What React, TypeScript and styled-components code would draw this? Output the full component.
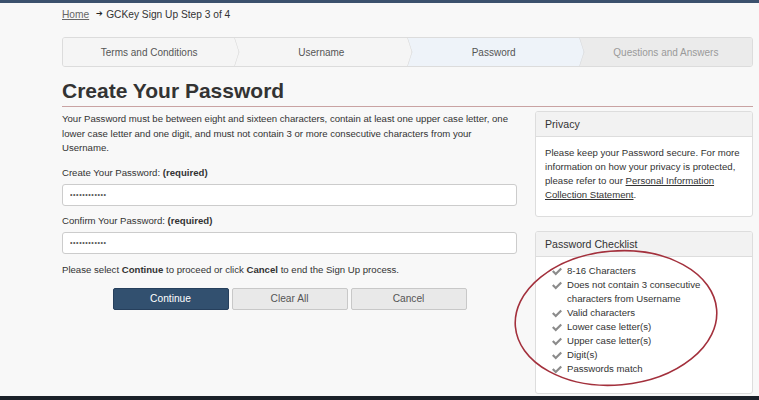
import styled, { createGlobalStyle } from 'styled-components';

const GlobalStyle = createGlobalStyle`
html, body {
  margin: 0;
  padding: 0;
  background: #f8f8f8;
  font-family: "Liberation Sans", Arial, sans-serif;
  color: #333;
}
`;

const Page = styled.div`
display: flex;
flex-direction: column;
height: 100vh;
overflow: hidden;
`;
const TopBar = styled.div`
height: 3px;
background: #3b516d;
flex-shrink: 0;
`;
const BottomBar = styled.div`
height: 4px;
background: #1b2129;
flex-shrink: 0;
`;
const Main = styled.main`
flex: 1;
overflow: hidden;
padding: 0 6px 0 62px;
`;
const Breadcrumb = styled.div`
display: flex;
align-items: center;
height: 14px;
margin-top: 4px;
margin-bottom: 16px;
font-size: 10.2px;
color: #333;
`;
const CrumbLink = styled.a`
color: #666;
text-decoration: underline;
margin-right: 7px;
`;
const Arrow = styled.span`
font-size: 8px;
line-height: 8px;
margin-right: 3px;
color: #222;
`;

const StepBar = styled.div`
display: flex;
height: 28px;
border: 1px solid #dcdcdc;
border-radius: 3px;
overflow: hidden;
`;
const Step = styled.div<{ $state: 'done' | 'active' | 'todo' }>`
position: relative;
flex: 1;
display: flex;
align-items: center;
justify-content: center;
font-size: 10px;
color: ${p => (p.$state === 'todo' ? '#9a9a9a' : '#555')};
background: ${p => (p.$state === 'active' ? '#eef3f9' : p.$state === 'todo' ? '#ebebeb' : '#f5f5f5')};

&:not(:last-child)::after {
  content: '';
  position: absolute;
  top: 50%;
  right: -10px;
  width: 20px;
  height: 20px;
  background: inherit;
  border-top: 1px solid #d2d2d2;
  border-right: 1px solid #d2d2d2;
  transform: translateY(-50%) scaleX(0.32) rotate(45deg);
  z-index: 1;
}
`;

const Title = styled.h1`
margin: 11px 0 0;
font-size: 21px;
line-height: 26px;
font-weight: bold;
color: #333;
padding-bottom: 2px;
border-bottom: 1px solid #c9a3a3;
`;

const Columns = styled.div`
display: flex;
gap: 18px;
margin-top: 5px;
`;
const LeftCol = styled.div`
width: 455px;
font-size: 9.6px;
`;
const RightCol = styled.div`
position: relative;
width: 218px;
margin-top: -1px;
`;
const Intro = styled.p`
margin: 0;
line-height: 14.5px;
`;
const FieldLabel = styled.label<{ $top: number }>`
display: block;
margin-top: ${p => p.$top}px;
margin-bottom: 4px;
line-height: 14px;
`;
const PasswordInput = styled.input`
display: block;
box-sizing: border-box;
width: 100%;
height: 22px;
padding: 0 7px;
border: 1px solid #ccc;
border-radius: 3px;
background: #fff;
font-size: 7px;
letter-spacing: 0.6px;
color: #555;
outline: none;
`;
const Note = styled.p`
margin: 9px 0 0;
line-height: 14px;
`;
const ButtonRow = styled.div`
display: flex;
justify-content: center;
gap: 3px;
margin-top: 11px;
`;
const Button = styled.button<{ $primary?: boolean }>`
width: 116px;
height: 22px;
border-radius: 2px;
font-family: "Liberation Sans", Arial, sans-serif;
font-size: 10.2px;
cursor: pointer;
border: 1px solid ${p => (p.$primary ? '#263f5c' : '#c8c8c8')};
background: ${p => (p.$primary ? '#32506f' : '#e9e9e9')};
color: ${p => (p.$primary ? '#fff' : '#555')};
`;

const Panel = styled.section<{ $gap?: number }>`
margin-top: ${p => p.$gap ?? 0}px;
border: 1px solid #ddd;
border-radius: 3px;
background: #fff;
overflow: hidden;
`;
const PanelHead = styled.div`
height: 24px;
display: flex;
align-items: center;
padding: 0 9px;
background: #f2f2f2;
border-bottom: 1px solid #ddd;
font-size: 10.6px;
color: #333;
`;
const PanelBody = styled.div<{ $pad: string }>`
padding: ${p => p.$pad};
font-size: 9.6px;
line-height: 14px;
color: #333;
`;
const PlainLink = styled.a`
color: #333;
text-decoration: underline;
`;
const CheckList = styled.ul`
list-style: none;
margin: 0;
padding: 0;
`;
const CheckItem = styled.li`
display: flex;
align-items: flex-start;
`;
const CheckMark = styled.span`
flex-shrink: 0;
width: 15px;
height: 14px;
display: flex;
align-items: center;
`;
const Annotation = styled.svg`
position: absolute;
left: -27px;
top: 134px;
pointer-events: none;
overflow: visible;
`;

const Tick = () => (
  <CheckMark>
    <svg width="10" height="9" viewBox="0 0 16 14">
      <polygon points="0,7.5 2.5,5 6,8.5 13.5,1 16,3.5 6,13.5" fill="#8c8c8c" />
    </svg>
  </CheckMark>
);

const steps: { label: string; state: 'done' | 'active' | 'todo' }[] = [
  { label: 'Terms and Conditions', state: 'done' },
  { label: 'Username', state: 'done' },
  { label: 'Password', state: 'active' },
  { label: 'Questions and Answers', state: 'todo' },
];

const checks = [
  ['8-16 Characters'],
  ['Does not contain 3 consecutive', 'characters from Username'],
  ['Valid characters'],
  ['Lower case letter(s)'],
  ['Upper case letter(s)'],
  ['Digit(s)'],
  ['Passwords match'],
];

export default function App() {
  return (
    <Page>
      <GlobalStyle />
      <TopBar />
      <Main>
        <Breadcrumb>
          <CrumbLink href="#">Home</CrumbLink>
          <Arrow>➔</Arrow>
          GCKey Sign Up Step 3 of 4
        </Breadcrumb>
        <StepBar>
          {steps.map(s => (
            <Step key={s.label} $state={s.state}>{s.label}</Step>
          ))}
        </StepBar>
        <Title>Create Your Password</Title>
        <Columns>
          <LeftCol>
            <Intro>
              Your Password must be between eight and sixteen characters, contain at least one upper case letter, one
              lower case letter and one digit, and must not contain 3 or more consecutive characters from your
              Username.
            </Intro>
            <FieldLabel $top={10}>Create Your Password: <b>(required)</b></FieldLabel>
            <PasswordInput type="password" defaultValue="Password1234" readOnly />
            <FieldLabel $top={8}>Confirm Your Password: <b>(required)</b></FieldLabel>
            <PasswordInput type="password" defaultValue="Password1234" readOnly />
            <Note>
              Please select <b>Continue</b> to proceed or click <b>Cancel</b> to end the Sign Up process.
            </Note>
            <ButtonRow>
              <Button $primary>Continue</Button>
              <Button>Clear All</Button>
              <Button>Cancel</Button>
            </ButtonRow>
          </LeftCol>
          <RightCol>
            <Panel>
              <PanelHead>Privacy</PanelHead>
              <PanelBody $pad="9px 9px 14px">
                Please keep your Password secure. For more information on how your privacy is protected, please
                refer to our <PlainLink href="#">Personal Information Collection Statement</PlainLink>.
              </PanelBody>
            </Panel>
            <Panel $gap={14}>
              <PanelHead>Password Checklist</PanelHead>
              <PanelBody $pad="7px 9px 17px 16px">
                <CheckList>
                  {checks.map(lines => (
                    <CheckItem key={lines[0]}>
                      <Tick />
                      <div>
                        {lines.map(l => (
                          <div key={l}>{l}</div>
                        ))}
                      </div>
                    </CheckItem>
                  ))}
                </CheckList>
              </PanelBody>
            </Panel>
            <Annotation width="220" height="150" viewBox="0 0 220 150">
              <ellipse
                cx="108"
                cy="73"
                rx="101"
                ry="67"
                fill="none"
                stroke="#a3303c"
                strokeWidth="1.6"
                transform="rotate(-5 108 73)"
              />
            </Annotation>
          </RightCol>
        </Columns>
      </Main>
      <BottomBar />
    </Page>
  );
}
